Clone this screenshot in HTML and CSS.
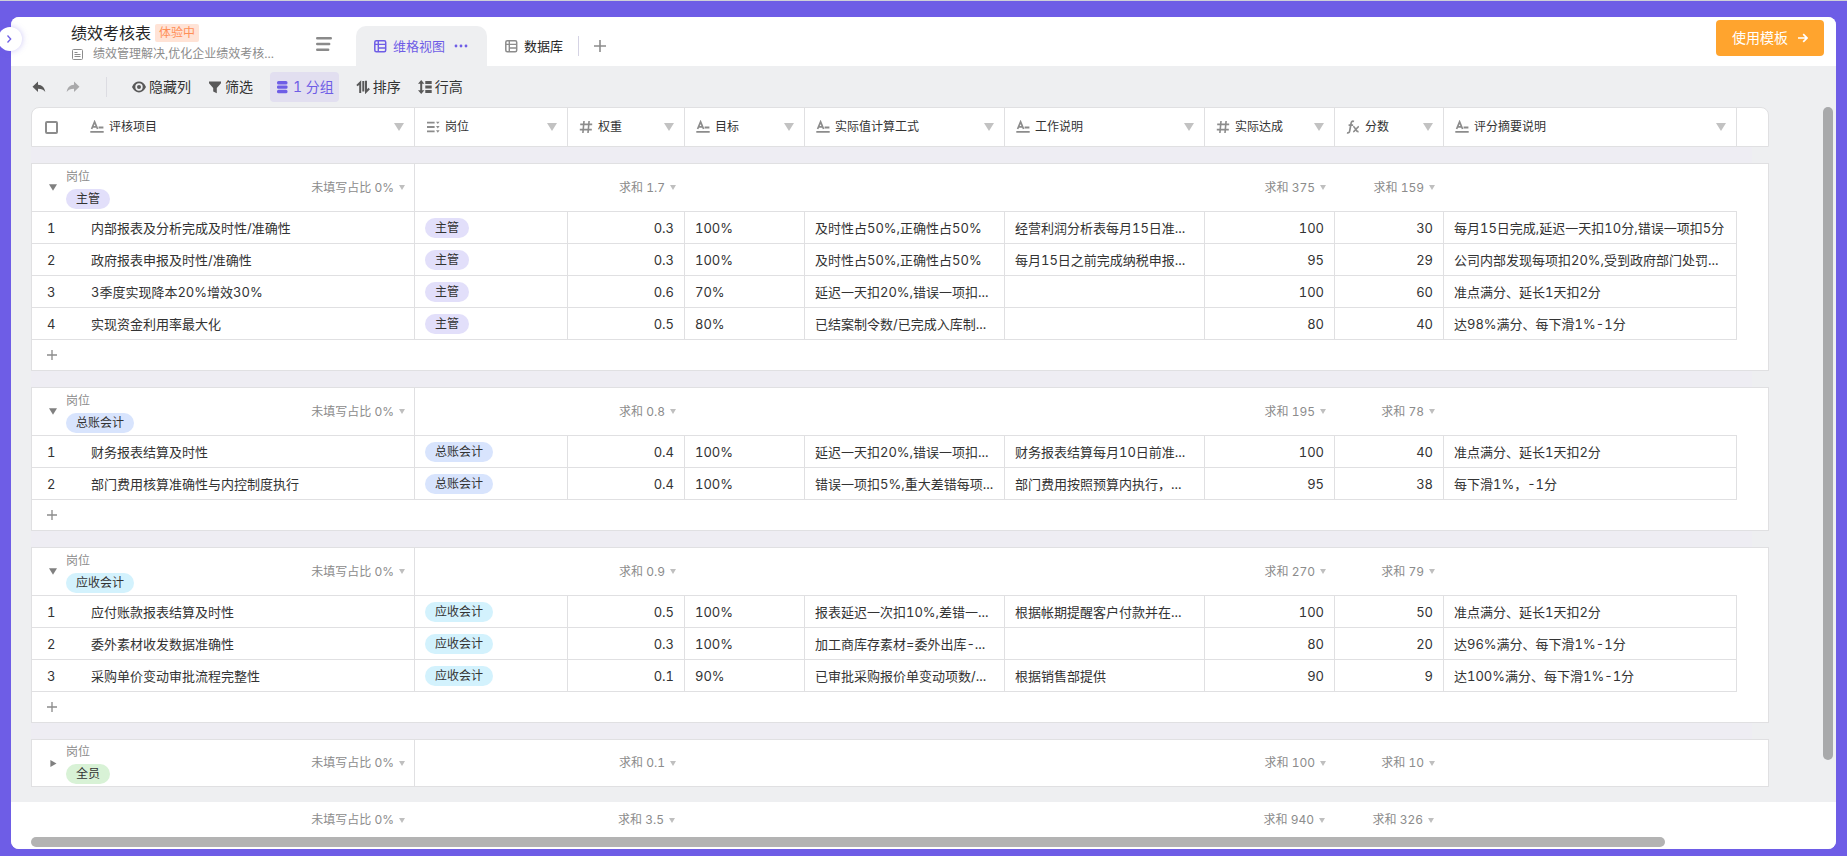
FILE: index.html
```html
<!DOCTYPE html>
<html lang="zh-CN">
<head>
<meta charset="utf-8">
<title>绩效考核表</title>
<link rel="stylesheet" href="styles.css">
</head>
<body>
<svg class="sprite" aria-hidden="true">
  <symbol id="i-text" viewBox="0 0 14 14"><path d="M1.600 9 4.600 1.800 7.600 9M2.700 6.800h3.800" fill="none" stroke="currentColor" stroke-width="1.700"/><path d="M8.600 6.600h4.800v1.800H8.600zM.3 10.900h13.400v1.800H.3z" fill="currentColor"/></symbol>
  <symbol id="i-select" viewBox="0 0 14 14"><path d="M1 1.800h7.600v1.800H1zM1 6.100h7.600v1.800H1zM1 10.400h7.600v1.800H1zM10 1.700h3.600l-1.800 2.400zM10 6h3.600l-1.800 2.400zM10 10.300h3.600l-1.800 2.400z" fill="currentColor"/></symbol>
  <symbol id="i-hash" viewBox="0 0 14 14"><path d="M5 1 3.900 13M10.100 1 9 13M1.200 4.400h12M.8 9.600h12" fill="none" stroke="currentColor" stroke-width="1.600"/></symbol>
  <symbol id="i-fx" viewBox="0 0 14 14"><path d="M8 1.500C6.200.7 5.400 1.600 5.100 3.200L3.700 10.800C3.400 12.600 2.400 13.200 1 12.700M2.600 5.100h4.500" fill="none" stroke="currentColor" stroke-width="1.700"/><path d="M7.200 6.600c2.200-.4 2.400 5.800 5.400 5M12.900 6.600c-1.800 0-3.700 5.100-5.800 5.100" fill="none" stroke="currentColor" stroke-width="1.600"/></symbol>
  <symbol id="i-table" viewBox="0 0 14 14"><rect x="1.800" y="1.800" width="10.900" height="10.900" rx="1.500" fill="none" stroke="currentColor" stroke-width="1.500"/><path d="M5.300 2v10.500M2 5.400h10.500M5.300 9h7.200" fill="none" stroke="currentColor" stroke-width="1.400"/></symbol>
  <symbol id="i-down" viewBox="0 0 10 8"><path d="M0 0h10L5 8z" fill="currentColor"/></symbol>
  <symbol id="i-plus" viewBox="0 0 12 12"><path d="M6 0v12M0 6h12" fill="none" stroke="currentColor" stroke-width="1.600"/></symbol>
  <symbol id="i-arrow" viewBox="0 0 14 12"><path d="M6 .5v3.200c4 .3 6.700 2.700 7.300 7.300C11.500 8.500 9.500 7.700 6 7.700V11L.5 5.700z" fill="currentColor"/></symbol>
</svg>

<div class="panel">
  <button class="expand" type="button" aria-label="展开"><svg viewBox="0 0 8 8"><path d="M2.500.5 5.700 4 2.500 7.500" fill="none" stroke="currentColor" stroke-width="1.300"/></svg></button>

  <header class="head">
    <div class="info">
      <div class="title-line"><h1 class="title">绩效考核表</h1><span class="badge">体验中</span></div>
      <div class="desc"><svg class="desc-icon" viewBox="0 0 11 11"><rect x=".5" y=".5" width="10" height="10" rx="1" fill="none" stroke="currentColor"/><path d="M2.500 3.500h3M2.500 5.500h6M2.500 7.500h6" stroke="currentColor"/></svg><span>绩效管理解决,优化企业绩效考核...</span></div>
    </div>
    <button class="menu" type="button" aria-label="视图列表"><svg viewBox="0 0 16 14"><path d="M1.200 1.300h13.600M1.200 7h12M1.200 12.700h11" fill="none" stroke="currentColor" stroke-width="2.400" stroke-linecap="round"/></svg></button>
    <nav class="tabs">
      <button class="tab tab-on" type="button"><svg class="ico"><use href="#i-table"/></svg><span>维格视图</span><svg class="dots" viewBox="0 0 14 4"><circle cx="2" cy="2" r="1.400"/><circle cx="7" cy="2" r="1.400"/><circle cx="12" cy="2" r="1.400"/></svg></button>
      <button class="tab" type="button"><svg class="ico"><use href="#i-table"/></svg><span>数据库</span></button>
      <button class="tab-add" type="button" aria-label="新建视图"><svg><use href="#i-plus"/></svg></button>
    </nav>
    <button class="use" type="button">使用模板<svg viewBox="0 0 10 10"><path d="M0 5h9M5.200 1.200 9 5 5.200 8.800" fill="none" stroke="currentColor" stroke-width="1.700"/></svg></button>
  </header>

  <div class="toolbar">
    <button class="undo" type="button" aria-label="撤销"><svg><use href="#i-arrow"/></svg></button>
    <button class="undo redo" type="button" aria-label="重做"><svg><use href="#i-arrow"/></svg></button>
    <div class="tools">
      <button class="tool" type="button"><svg class="ico" viewBox="0 0 14 14"><path fill-rule="evenodd" d="M0 7C3-.2 11-.2 14 7 11 14.200 3 14.200 0 7zM7 3.300a3.700 3.700 0 1 0 0 7.400 3.700 3.700 0 0 0 0-7.400z" fill="currentColor"/><circle cx="7" cy="7" r="2" fill="currentColor"/></svg>隐藏列</button>
      <button class="tool" type="button"><svg class="ico" viewBox="0 0 14 14"><path d="M1 1.500h12v1.800L8.800 8v5.300L5.200 11.500V8L1 3.300z" fill="currentColor"/></svg>筛选</button>
      <button class="tool tool-on" type="button"><svg class="ico" viewBox="0 0 14 14"><rect x="2" y="1" width="10.500" height="3.400" rx="1.500" fill="currentColor"/><rect x="2" y="5.400" width="10.500" height="3.400" rx="1.200" fill="currentColor"/><rect x="2" y="9.800" width="10.500" height="3.400" rx="1.500" fill="currentColor"/></svg>1 分组</button>
      <button class="tool" type="button"><svg class="ico" viewBox="0 0 14 14"><path d="M4.200 13V2.500L1 5.600M7.300 1v10.500M10 .8v11l3.200-3.300" fill="none" stroke="currentColor" stroke-width="2"/></svg>排序</button>
      <button class="tool" type="button"><svg class="ico" viewBox="0 0 14 14"><path d="M3.200 0 6.400 3.800H4.200v6.400h2.200L3.200 14 0 10.200h2.200V3.800H0zM7.300 1h6.400v3H7.300zM7.300 5.500h6.400v3H7.300zM7.300 10h6.400v3H7.300z" fill="currentColor"/></svg>行高</button>
    </div>
  </div>

  <main class="body">
    <div class="sheet">
      <table class="grid grid-head">
        <colgroup><col class="w1"><col class="w2"><col class="w3"><col class="w4"><col class="w5"><col class="w5"><col class="w7"><col class="w8"><col><col class="w10"></colgroup>
        <thead><tr>
          <th><div class="field"><input class="check" type="checkbox" aria-label="全选"><svg class="ico"><use href="#i-text"/></svg><span>评核项目</span><svg class="down"><use href="#i-down"/></svg></div></th>
          <th><div class="field"><svg class="ico"><use href="#i-select"/></svg><span>岗位</span><svg class="down"><use href="#i-down"/></svg></div></th>
          <th><div class="field"><svg class="ico"><use href="#i-hash"/></svg><span>权重</span><svg class="down"><use href="#i-down"/></svg></div></th>
          <th><div class="field"><svg class="ico"><use href="#i-text"/></svg><span>目标</span><svg class="down"><use href="#i-down"/></svg></div></th>
          <th><div class="field"><svg class="ico"><use href="#i-text"/></svg><span>实际值计算工式</span><svg class="down"><use href="#i-down"/></svg></div></th>
          <th><div class="field"><svg class="ico"><use href="#i-text"/></svg><span>工作说明</span><svg class="down"><use href="#i-down"/></svg></div></th>
          <th><div class="field"><svg class="ico"><use href="#i-hash"/></svg><span>实际达成</span><svg class="down"><use href="#i-down"/></svg></div></th>
          <th><div class="field"><svg class="ico"><use href="#i-fx"/></svg><span>分数</span><svg class="down"><use href="#i-down"/></svg></div></th>
          <th><div class="field"><svg class="ico"><use href="#i-text"/></svg><span>评分摘要说明</span><svg class="down"><use href="#i-down"/></svg></div></th>
          <td class="none"></td>
        </tr></thead>
      </table>

      <section class="group">
        <table class="grid">
          <colgroup><col class="w1"><col class="w2"><col class="w3"><col class="w4"><col class="w5"><col class="w5"><col class="w7"><col class="w8"><col><col class="w10"></colgroup>
          <thead><tr class="sum">
            <th><div class="ghead"><svg class="fold"><use href="#i-down"/></svg><div class="gname"><span>岗位</span><span class="tag violet">主管</span></div><span class="stat">未填写占比 0%<svg><use href="#i-down"/></svg></span></div></th>
            <td></td><td><span class="stat">求和 1.7<svg><use href="#i-down"/></svg></span></td><td></td><td></td><td></td><td><span class="stat">求和 375<svg><use href="#i-down"/></svg></span></td><td><span class="stat">求和 159<svg><use href="#i-down"/></svg></span></td><td></td><td class="none"></td>
          </tr></thead>
          <tbody>
            <tr><td><span class="no">1</span>内部报表及分析完成及时性/准确性</td><td><span class="tag violet">主管</span></td><td class="num">0.3</td><td>100%</td><td>及时性占50%,正确性占50%</td><td>经营利润分析表每月15日准...</td><td class="num">100</td><td class="num">30</td><td>每月15日完成,延迟一天扣10分,错误一项扣5分</td><td class="none"></td></tr>
            <tr><td><span class="no">2</span>政府报表申报及时性/准确性</td><td><span class="tag violet">主管</span></td><td class="num">0.3</td><td>100%</td><td>及时性占50%,正确性占50%</td><td>每月15日之前完成纳税申报...</td><td class="num">95</td><td class="num">29</td><td>公司内部发现每项扣20%,受到政府部门处罚...</td><td class="none"></td></tr>
            <tr><td><span class="no">3</span>3季度实现降本20%增效30%</td><td><span class="tag violet">主管</span></td><td class="num">0.6</td><td>70%</td><td>延迟一天扣20%,错误一项扣...</td><td></td><td class="num">100</td><td class="num">60</td><td>准点满分、延长1天扣2分</td><td class="none"></td></tr>
            <tr><td><span class="no">4</span>实现资金利用率最大化</td><td><span class="tag violet">主管</span></td><td class="num">0.5</td><td>80%</td><td>已结案制令数/已完成入库制...</td><td></td><td class="num">80</td><td class="num">40</td><td>达98%满分、每下滑1%-1分</td><td class="none"></td></tr>
          </tbody>
        </table>
        <button class="add" type="button" aria-label="新增记录"><svg><use href="#i-plus"/></svg></button>
      </section>

      <section class="group">
        <table class="grid">
          <colgroup><col class="w1"><col class="w2"><col class="w3"><col class="w4"><col class="w5"><col class="w5"><col class="w7"><col class="w8"><col><col class="w10"></colgroup>
          <thead><tr class="sum">
            <th><div class="ghead"><svg class="fold"><use href="#i-down"/></svg><div class="gname"><span>岗位</span><span class="tag blue">总账会计</span></div><span class="stat">未填写占比 0%<svg><use href="#i-down"/></svg></span></div></th>
            <td></td><td><span class="stat">求和 0.8<svg><use href="#i-down"/></svg></span></td><td></td><td></td><td></td><td><span class="stat">求和 195<svg><use href="#i-down"/></svg></span></td><td><span class="stat">求和 78<svg><use href="#i-down"/></svg></span></td><td></td><td class="none"></td>
          </tr></thead>
          <tbody>
            <tr><td><span class="no">1</span>财务报表结算及时性</td><td><span class="tag blue">总账会计</span></td><td class="num">0.4</td><td>100%</td><td>延迟一天扣20%,错误一项扣...</td><td>财务报表结算每月10日前准...</td><td class="num">100</td><td class="num">40</td><td>准点满分、延长1天扣2分</td><td class="none"></td></tr>
            <tr><td><span class="no">2</span>部门费用核算准确性与内控制度执行</td><td><span class="tag blue">总账会计</span></td><td class="num">0.4</td><td>100%</td><td>错误一项扣5%,重大差错每项...</td><td>部门费用按照预算内执行，...</td><td class="num">95</td><td class="num">38</td><td>每下滑1%，-1分</td><td class="none"></td></tr>
          </tbody>
        </table>
        <button class="add" type="button" aria-label="新增记录"><svg><use href="#i-plus"/></svg></button>
      </section>

      <section class="group">
        <table class="grid">
          <colgroup><col class="w1"><col class="w2"><col class="w3"><col class="w4"><col class="w5"><col class="w5"><col class="w7"><col class="w8"><col><col class="w10"></colgroup>
          <thead><tr class="sum">
            <th><div class="ghead"><svg class="fold"><use href="#i-down"/></svg><div class="gname"><span>岗位</span><span class="tag cyan">应收会计</span></div><span class="stat">未填写占比 0%<svg><use href="#i-down"/></svg></span></div></th>
            <td></td><td><span class="stat">求和 0.9<svg><use href="#i-down"/></svg></span></td><td></td><td></td><td></td><td><span class="stat">求和 270<svg><use href="#i-down"/></svg></span></td><td><span class="stat">求和 79<svg><use href="#i-down"/></svg></span></td><td></td><td class="none"></td>
          </tr></thead>
          <tbody>
            <tr><td><span class="no">1</span>应付账款报表结算及时性</td><td><span class="tag cyan">应收会计</span></td><td class="num">0.5</td><td>100%</td><td>报表延迟一次扣10%,差错一...</td><td>根据帐期提醒客户付款并在...</td><td class="num">100</td><td class="num">50</td><td>准点满分、延长1天扣2分</td><td class="none"></td></tr>
            <tr><td><span class="no">2</span>委外素材收发数据准确性</td><td><span class="tag cyan">应收会计</span></td><td class="num">0.3</td><td>100%</td><td>加工商库存素材=委外出库-...</td><td></td><td class="num">80</td><td class="num">20</td><td>达96%满分、每下滑1%-1分</td><td class="none"></td></tr>
            <tr><td><span class="no">3</span>采购单价变动审批流程完整性</td><td><span class="tag cyan">应收会计</span></td><td class="num">0.1</td><td>90%</td><td>已审批采购报价单变动项数/...</td><td>根据销售部提供</td><td class="num">90</td><td class="num">9</td><td>达100%满分、每下滑1%-1分</td><td class="none"></td></tr>
          </tbody>
        </table>
        <button class="add" type="button" aria-label="新增记录"><svg><use href="#i-plus"/></svg></button>
      </section>

      <section class="group folded">
        <table class="grid">
          <colgroup><col class="w1"><col class="w2"><col class="w3"><col class="w4"><col class="w5"><col class="w5"><col class="w7"><col class="w8"><col><col class="w10"></colgroup>
          <thead><tr class="sum">
            <th><div class="ghead"><svg class="fold" viewBox="0 0 8 8"><path d="M1 0l7 4-7 4z" fill="currentColor"/></svg><div class="gname"><span>岗位</span><span class="tag green">全员</span></div><span class="stat">未填写占比 0%<svg><use href="#i-down"/></svg></span></div></th>
            <td></td><td><span class="stat">求和 0.1<svg><use href="#i-down"/></svg></span></td><td></td><td></td><td></td><td><span class="stat">求和 100<svg><use href="#i-down"/></svg></span></td><td><span class="stat">求和 10<svg><use href="#i-down"/></svg></span></td><td></td><td class="none"></td>
          </tr></thead>
        </table>
      </section>
    </div>
    <div class="vbar"></div>
  </main>

  <footer class="foot">
    <table class="grid">
      <colgroup><col class="w1"><col class="w2"><col class="w3"><col class="w4"><col class="w5"><col class="w5"><col class="w7"><col class="w8"><col><col class="w10"></colgroup>
      <tbody><tr>
        <td><span class="stat">未填写占比 0%<svg><use href="#i-down"/></svg></span></td><td></td><td><span class="stat">求和 3.5<svg><use href="#i-down"/></svg></span></td><td></td><td></td><td></td><td><span class="stat">求和 940<svg><use href="#i-down"/></svg></span></td><td><span class="stat">求和 326<svg><use href="#i-down"/></svg></span></td><td></td><td></td>
      </tr></tbody>
    </table>
    <div class="hbar"></div>
  </footer>
</div>
</body>
</html>
```
FILE: styles.css
```css
* { box-sizing: border-box; }
body {
  margin: 0;
  height: 100vh;
  padding: 16px 11px 7px;
  border-top: 1px solid #cfd0d8;
  background: #6e5de6;
  font: 13px/20px Inter, "Noto Sans CJK SC", sans-serif;
  font-variant-numeric: tabular-nums;
  color: #333;
}
button { font: inherit; font-variant-numeric: inherit; color: inherit; background: none; border: 0; padding: 0; }
svg { display: block; flex: none; }
.sprite { position: absolute; width: 0; height: 0; }
.ico { width: 14px; height: 14px; }

.panel {
  position: relative;
  display: flex;
  flex-direction: column;
  height: 100%;
  background: #eeeff1;
  border-radius: 8px;
}
.expand {
  position: absolute;
  left: -13px;
  top: 10px;
  width: 24px;
  height: 24px;
  border-radius: 50%;
  background: #fff;
  color: #6e5de6;
  box-shadow: 0 0 6px rgba(110, 93, 230, 0.35);
  display: flex;
  align-items: center;
  justify-content: center;
}
.expand svg { width: 8px; height: 8px; margin-right: 2px; }

.head {
  display: flex;
  height: 49px;
  padding-left: 60px;
  background: #fff;
  border-radius: 8px 8px 0 0;
}
.info { flex: 0 0 245px; padding-top: 5px; }
.title-line { display: flex; align-items: center; gap: 4px; height: 22px; }
.title { margin: 0; font-size: 16px; font-weight: 400; line-height: 22px; color: #262626; }
.badge {
  padding: 0 4px;
  border-radius: 2px;
  background: #ffe3d6;
  color: #ff8f57;
  font-size: 12px;
  line-height: 18px;
}
.desc { display: flex; align-items: center; gap: 10px; padding-left: 1px; font-size: 12px; color: #8c8c8c; }
.desc-icon { width: 11px; height: 11px; }
.menu { color: #8a8a8a; width: 16px; padding-top: 4px; }
.menu svg { width: 16px; height: 14px; }
.tabs { display: flex; align-items: flex-end; padding-left: 24px; color: #262626; }
.tab { display: flex; align-items: center; gap: 6px; height: 40px; padding: 0 15px 0 17px; }
.tab .ico { color: #8c8c8c; }
.tab-on { background: #eeeff1; border-radius: 10px 10px 0 0; color: #6e5de6; padding-right: 19px; }
.tab-on .ico { color: #6e5de6; }
.dots { width: 14px; height: 4px; margin-left: 3px; fill: #6e5de6; }
.tab-add {
  height: 20px;
  margin-bottom: 10px;
  padding-left: 15px;
  border-left: 1px solid #d5d3e4;
  color: #8c8c8c;
}
.tab-add svg { width: 12px; height: 12px; }
.use {
  display: flex;
  align-items: center;
  gap: 10px;
  height: 36px;
  margin: 3px 12px 0 auto;
  padding: 0 16px;
  border-radius: 4px;
  background: #ffa42e;
  color: #fff;
  font-size: 14px;
  line-height: 22px;
}
.use svg { width: 10px; height: 10px; }

.toolbar {
  display: flex;
  align-items: center;
  height: 41px;
  padding-left: 21px;
  font-size: 14px;
  color: #333;
}
.undo { width: 14px; color: #595959; }
.undo svg { width: 14px; height: 12px; }
.redo { margin-left: 20px; color: #a9a9ab; transform: scaleX(-1); }
.tools {
  display: flex;
  align-items: center;
  gap: 17px;
  height: 20px;
  margin-left: 26px;
  padding-left: 25px;
  border-left: 1px solid #dcdce2;
}
.tool { display: flex; align-items: center; gap: 3px; height: 30px; }
.tool .ico { color: #595959; }
.tool-on { padding: 0 5px; gap: 4px; border-radius: 4px; background: #e2dff0; color: #6e5de6; }
.tool-on .ico { color: #6e5de6; }

.body { position: relative; flex: 1; padding: 0 67px 0 20px; }
.sheet {
  display: flex;
  flex-direction: column;
  gap: 16px;
  background: linear-gradient(#eeedf3, #eeedf3) 0 20px / calc(100% - 17px) 100% no-repeat;
}
.grid { width: 100%; table-layout: fixed; border-collapse: separate; border-spacing: 0; }
.w1 { width: 383px; }
.w2 { width: 153px; }
.w3 { width: 117px; }
.w4 { width: 120px; }
.w5 { width: 200px; }
.w7 { width: 130px; }
.w8 { width: 109px; }
.w10 { width: 31px; }
.grid th, .grid td {
  height: 32px;
  padding: 0 10px;
  border: 0 solid #e0e0e2;
  border-width: 0 1px 1px 0;
  font-weight: 400;
  text-align: left;
  white-space: nowrap;
  overflow: hidden;
}
.grid .none { border: 0; padding: 0; }
.grid .num { text-align: right; }
.grid .sum th, .grid .sum td { height: 48px; }
.grid .sum td { border-right: 0; padding-right: 9px; }
.grid .sum th { padding: 0 9px 0 17px; }

.grid-head { background: #fff; border: 1px solid #e0e0e2; border-radius: 8px 8px 0 0; }
.grid.grid-head th, .grid.grid-head td { height: 38px; border-bottom: 0; }
.field { display: flex; align-items: center; gap: 5px; font-size: 12px; padding-left: 1px; }
.field .ico { color: #8c8c8c; }
.down { width: 10px; height: 8px; margin-left: auto; color: #c2c2c2; }
.check {
  appearance: none;
  width: 13px;
  height: 13px;
  margin: 0 27px 0 2px;
  border: 2px solid #8c8c8c;
  border-radius: 2px;
  background: #fff;
}

.group { background: #fff; border: 1px solid #e0e0e2; }
.grid .no { display: inline-block; width: 44px; }
.grid tbody td:first-child { padding-left: 15px; }
.ghead { display: flex; align-items: center; gap: 9px; }
.fold { width: 8px; height: 7px; color: #808080; }
.gname { display: flex; flex-direction: column; align-items: flex-start; gap: 2px; font-size: 12px; color: #8c8c8c; }
.tag {
  display: block;
  width: max-content;
  padding: 0 10px;
  border-radius: 10px;
  font-size: 12px;
  line-height: 20px;
  color: #333;
}
.grid tbody td:has(> .tag) { padding-top: 1px; }
.violet { background: #e2dffa; }
.blue { background: #d8e4fd; }
.cyan { background: #d3f2fd; }
.green { background: #d8f2d6; }
.stat {
  display: flex;
  align-items: center;
  justify-content: flex-end;
  gap: 5px;
  margin-left: auto;
  font-size: 12px;
  color: #8c8c8c;
}
.stat svg { width: 6px; height: 5px; color: #bfbfbf; }
.add { display: block; height: 30px; padding-left: 15px; color: #8c8c8c; }
.add svg { width: 10px; height: 10px; }
.folded .grid .sum th, .folded .grid .sum td { height: 46px; border-bottom: 0; }

.vbar {
  position: absolute;
  top: 0;
  right: 3px;
  width: 10px;
  height: 94%;
  border-radius: 5px;
  background: #a8a9ab;
}
.foot { padding: 0 66px 2px 21px; background: #fff; border-radius: 0 0 8px 8px; }
.foot .grid td { height: 35px; border-color: transparent; }
.foot .grid td:has(> .stat) { padding: 2px 9px 0 0; }
.hbar {
  width: 94%;
  height: 10px;
  margin-left: -1px;
  border-radius: 5px;
  background: #b3b3b3;
}
```
